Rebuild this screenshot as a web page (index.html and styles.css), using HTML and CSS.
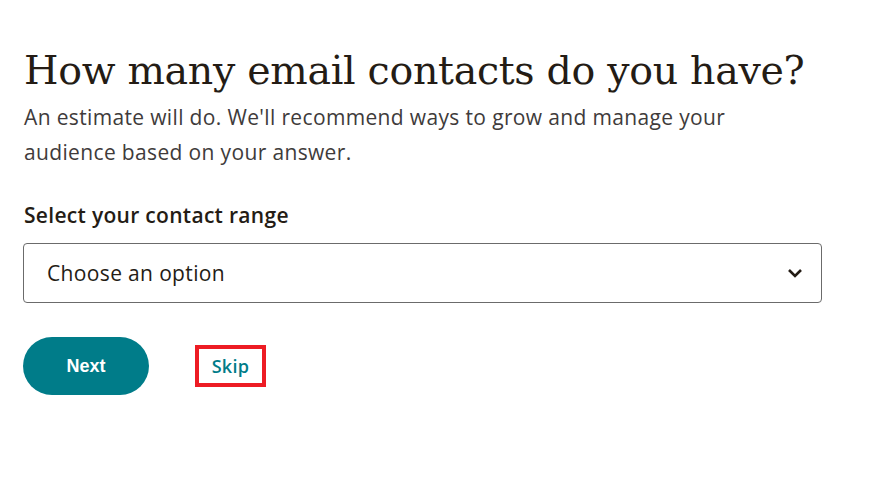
FILE: index.html
```html
<!DOCTYPE html>
<html lang="en">
  <head>
    <meta charset="UTF-8" />
    <title>Contacts</title>
    <link rel="stylesheet" href="styles.css">
  </head>
  <body>
    <main class="step">
      <h1 class="step-title">How many email contacts do you have?</h1>
      <p class="step-lead">
        An estimate will do. We'll recommend ways to grow and manage your
        audience based on your answer.
      </p>

      <label class="field-label" for="range">Select your contact range</label>
      <div class="select-box">
        <span class="select-value">Choose an option</span>
        <svg class="chevron" width="16" height="10" viewBox="0 0 16 10">
          <path d="M2 2 L8 8 L14 2" fill="none" stroke="#241c15" stroke-width="2.6" />
        </svg>
      </div>

      <div class="actions">
        <button class="btn-next">Next</button>
        <a class="skip-link" href="#">Skip</a>
      </div>
    </main>
  </body>
</html>
```

FILE: styles.css
```css
* {
  box-sizing: border-box;
  margin: 0;
  padding: 0;
}
body {
  background: #fff;
  color: #241c15;
  font-family: "Open Sans", "Noto Sans", sans-serif;
}
.step {
  padding: 40px 0 0 24px;
  width: 822px;
}
.step-title {
  font-family: "DejaVu Serif", serif;
  font-weight: 400;
  font-size: 39.5px;
  line-height: 60px;
  letter-spacing: -0.3px;
  white-space: nowrap;
}
.step-lead {
  font-size: 21px;
  line-height: 35px;
  letter-spacing: 0.35px;
  color: #403b3b;
  width: 740px;
}
.field-label {
  display: block;
  margin-top: 33px;
  font-size: 21px;
  font-weight: 600;
  line-height: 24px;
  letter-spacing: 0.3px;
}
.select-box {
  margin-top: 16px;
  height: 60px;
  width: 799px;
  margin-left: -1px;
  border: 1px solid #6b6b6b;
  border-radius: 4px;
  display: flex;
  align-items: center;
  justify-content: space-between;
  padding: 0 18px 0 23px;
}
.select-value {
  font-size: 21px;
  letter-spacing: 0.35px;
}
.actions {
  display: flex;
  align-items: center;
  margin-top: 34px;
  margin-left: -1px;
}
.btn-next {
  width: 126px;
  height: 58px;
  border: none;
  border-radius: 29px;
  background: #007c89;
  color: #fff;
  font-family: "Liberation Sans", sans-serif;
  font-size: 18px;
  font-weight: 700;
}
.skip-link {
  margin-left: 46px;
  width: 71px;
  height: 42px;
  border: 4px solid #ed1c24;
  display: flex;
  align-items: center;
  justify-content: center;
  color: #007c89;
  font-size: 18px;
  font-weight: 600;
  letter-spacing: 0.3px;
  text-decoration: none;
}
```
